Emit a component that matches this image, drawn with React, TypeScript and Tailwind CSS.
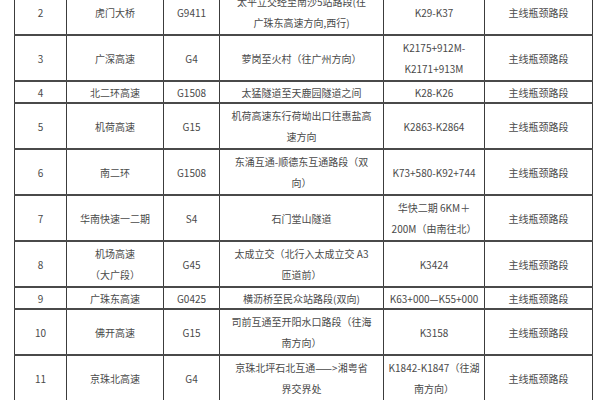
const rows: { no: string; name: string[]; code: string; section: string[]; km: string[]; type: string; tall: boolean }[] = [
  {
    no: "2",
    name: ["虎门大桥"],
    code: "G9411",
    section: ["太平立交经至南沙5站路段(往", "广珠东高速方向,西行)"],
    km: ["K29-K37"],
    type: "主线瓶颈路段",
    tall: true,
  },
  {
    no: "3",
    name: ["广深高速"],
    code: "G4",
    section: ["萝岗至火村（往广州方向）"],
    km: ["K2175+912M-", "K2171+913M"],
    type: "主线瓶颈路段",
    tall: true,
  },
  {
    no: "4",
    name: ["北二环高速"],
    code: "G1508",
    section: ["太猛隧道至天鹿园隧道之间"],
    km: ["K28-K26"],
    type: "主线瓶颈路段",
    tall: false,
  },
  {
    no: "5",
    name: ["机荷高速"],
    code: "G15",
    section: ["机荷高速东行荷坳出口往惠盐高", "速方向"],
    km: ["K2863-K2864"],
    type: "主线瓶颈路段",
    tall: true,
  },
  {
    no: "6",
    name: ["南二环"],
    code: "G1508",
    section: ["东涌互通-顺德东互通路段（双", "向）"],
    km: ["K73+580-K92+744"],
    type: "主线瓶颈路段",
    tall: true,
  },
  {
    no: "7",
    name: ["华南快速一二期"],
    code: "S4",
    section: ["石门堂山隧道"],
    km: ["华快二期 6KM＋", "200M（由南往北）"],
    type: "主线瓶颈路段",
    tall: true,
  },
  {
    no: "8",
    name: ["机场高速", "（大广段）"],
    code: "G45",
    section: ["太成立交（北行入太成立交 A3", "匝道前）"],
    km: ["K3424"],
    type: "主线瓶颈路段",
    tall: true,
  },
  {
    no: "9",
    name: ["广珠东高速"],
    code: "G0425",
    section: ["横沥桥至民众站路段(双向)"],
    km: ["K63+000—K55+000"],
    type: "主线瓶颈路段",
    tall: false,
  },
  {
    no: "10",
    name: ["佛开高速"],
    code: "G15",
    section: ["司前互通至开阳水口路段（往海", "南方向）"],
    km: ["K3158"],
    type: "主线瓶颈路段",
    tall: true,
  },
  {
    no: "11",
    name: ["京珠北高速"],
    code: "G4",
    section: ["京珠北坪石北互通——>湘粤省", "界交界处"],
    km: ["K1842-K1847（往湖", "南方向）"],
    type: "主线瓶颈路段",
    tall: true,
  },
];

const cell =
  "border-x border-x-[#3c3c3c] border-y-2 border-y-[#4a4a4a] p-0 text-center align-middle";

function Lines({ lines }: { lines: string[] }) {
  return (
    <>
      {lines.map((l, i) => (
        <div key={i} className="whitespace-nowrap">
          {l}
        </div>
      ))}
    </>
  );
}

export default function App() {
  return (
    <div className="h-[400px] w-[600px] overflow-hidden bg-white">
      <table
        className="ml-[14px] mt-[-12px] w-[578px] table-fixed border-collapse text-[10px] leading-[21px] text-[#4a4a4a]"
        style={{ fontFamily: '"Noto Sans CJK SC", "Noto Sans", sans-serif' }}
      >
        <colgroup>
          <col className="w-[52px]" />
          <col className="w-[97px]" />
          <col className="w-[56px]" />
          <col className="w-[164px]" />
          <col className="w-[101px]" />
          <col className="w-[108px]" />
        </colgroup>
        <tbody>
          {rows.map((r) => (
            <tr key={r.no} className={r.tall ? "h-[46px]" : "h-[22px] leading-[19px]"}>
              <td className={cell}>{r.no}</td>
              <td className={cell}>
                <Lines lines={r.name} />
              </td>
              <td className={cell}>{r.code}</td>
              <td className={cell}>
                <Lines lines={r.section} />
              </td>
              <td className={cell}>
                <Lines lines={r.km} />
              </td>
              <td className={cell}>{r.type}</td>
            </tr>
          ))}
          <tr className="h-[46px]">
            <td className={cell} colSpan={6}></td>
          </tr>
        </tbody>
      </table>
    </div>
  );
}
